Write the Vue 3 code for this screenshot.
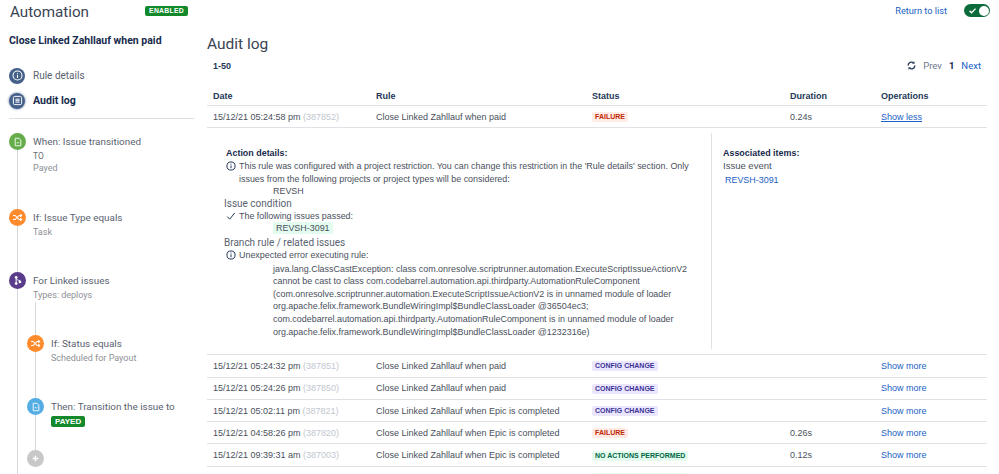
<template>
  <div class="page">
    <aside class="side">
      <div class="side-top">
        <h1 class="side-title">Automation</h1>
        <span class="enabled">ENABLED</span>
      </div>
      <p class="rule-name">Close Linked Zahllauf when paid</p>

      <div class="nav-item">
        <span class="nav-icon">
          <svg viewBox="0 0 16 16" width="11" height="11" fill="none" stroke="#fff" stroke-width="1.5">
            <circle cx="8" cy="8" r="6.5" />
            <path d="M8 7v4.5M8 4.2v1.4" />
          </svg>
        </span>
        <span>Rule details</span>
      </div>
      <div class="nav-item active">
        <span class="nav-icon">
          <svg viewBox="0 0 16 16" width="11" height="11" fill="none" stroke="#fff" stroke-width="1.4">
            <rect x="2" y="2" width="12" height="12" rx="2" />
            <path d="M5 6h6M5 8.2h6M5 10.4h6" />
          </svg>
        </span>
        <span>Audit log</span>
      </div>
      <div class="side-rule"></div>

      <div class="flow">
        <div class="step step-when">
          <span class="dot green">
            <svg viewBox="0 0 16 16" width="10" height="10" fill="none" stroke="#fff" stroke-width="1.4">
              <path d="M3.5 2h6L12.5 5v9h-9z" />
              <path d="M5.5 10l1.5-1.5 1.5 1.5 1.5-1.5" />
            </svg>
          </span>
          <div class="step-text">
            <p class="step-title">When: Issue transitioned</p>
            <p class="step-to">TO</p>
            <p class="step-sub">Payed</p>
          </div>
        </div>
        <div class="step step-if">
          <span class="dot orange">
            <svg viewBox="0 0 16 16" width="11" height="11" fill="none" stroke="#fff" stroke-width="1.6">
              <path d="M1.5 5h3l6 6h3M1.5 11h3l6-6h3M12 3l2 2-2 2M12 9l2 2-2 2" />
            </svg>
          </span>
          <div class="step-text">
            <p class="step-title">If: Issue Type equals</p>
            <p class="step-sub">Task</p>
          </div>
        </div>
        <div class="step step-for">
          <span class="dot purple">
            <svg viewBox="0 0 16 16" width="11" height="11" fill="#fff">
              <circle cx="6" cy="3.5" r="2" />
              <circle cx="6" cy="12.5" r="2" />
              <circle cx="11.5" cy="10" r="2" />
              <path d="M5.3 4h1.4v8H5.3zM6 6.5h2c2 0 4 1 4 3.5h-1.4c0-1.5-1.3-2.2-2.6-2.2H6z" />
            </svg>
          </span>
          <div class="step-text">
            <p class="step-title">For Linked issues</p>
            <p class="step-sub">Types: deploys</p>
          </div>
        </div>

        <div class="nested">
          <div class="step step-nested">
            <span class="dot orange">
              <svg viewBox="0 0 16 16" width="11" height="11" fill="none" stroke="#fff" stroke-width="1.6">
                <path d="M1.5 5h3l6 6h3M1.5 11h3l6-6h3M12 3l2 2-2 2M12 9l2 2-2 2" />
              </svg>
            </span>
            <div class="step-text">
              <p class="step-title">If: Status equals</p>
              <p class="step-sub">Scheduled for Payout</p>
            </div>
          </div>
          <div class="step step-then">
            <span class="dot blue">
              <svg viewBox="0 0 16 16" width="10" height="10" fill="none" stroke="#fff" stroke-width="1.4">
                <path d="M3.5 2h6L12.5 5v9h-9z" />
                <path d="M5.5 10l1.5-1.5 1.5 1.5 1.5-1.5" />
              </svg>
            </span>
            <div class="step-text">
              <p class="step-title">Then: Transition the issue to</p>
              <span class="payed">PAYED</span>
            </div>
          </div>
          <div class="step step-add">
            <span class="dot grey">
              <svg viewBox="0 0 16 16" width="9" height="9" fill="none" stroke="#fff" stroke-width="2.6">
                <path d="M8 3v10M3 8h10" />
              </svg>
            </span>
          </div>
        </div>
      </div>
    </aside>

    <main class="main">
      <div class="top-links">
        <a class="link">Return to list</a>
        <span class="toggle">
          <svg viewBox="0 0 12 12" width="9" height="9" fill="none" stroke="#fff" stroke-width="1.8">
            <path d="M2 6.5l2.8 2.5L10 3.5" />
          </svg>
          <span class="knob"></span>
        </span>
      </div>
      <h2 class="main-title">Audit log</h2>
      <div class="pager-row">
        <span class="range">1-50</span>
        <div class="pager">
          <svg viewBox="0 0 16 16" width="9" height="9" fill="none" stroke="#253858" stroke-width="2.4">
            <path d="M2 8a6 6 0 0 1 10-4.400M14 8a6 6 0 0 1-10 4.400" />
            <path d="M13 1v3.500h-3.500M3 15v-3.500h3.500" stroke-width="1.200" />
          </svg>
          <span class="prev">Prev</span>
          <span class="cur">1</span>
          <a class="link">Next</a>
        </div>
      </div>

      <table class="log">
        <colgroup>
          <col class="col-date" />
          <col class="col-rule" />
          <col class="col-status" />
          <col class="col-duration" />
          <col class="col-ops" />
        </colgroup>
        <thead>
          <tr>
            <th>Date</th>
            <th>Rule</th>
            <th>Status</th>
            <th>Duration</th>
            <th>Operations</th>
          </tr>
        </thead>
        <tbody>
          <tr>
            <td>15/12/21 05:24:58 pm <span class="num">(387852)</span></td>
            <td>Close Linked Zahllauf when paid</td>
            <td><span class="loz failure">FAILURE</span></td>
            <td>0.24s</td>
            <td><a class="link under">Show less</a></td>
          </tr>
          <tr class="detail-row">
            <td colspan="5">
              <div class="detail">
                <div class="detail-left">
                  <p class="detail-head">Action details:</p>
                  <div class="msg">
                    <svg class="msg-icon" viewBox="0 0 16 16" width="10" height="10" fill="none" stroke="#172b4d" stroke-width="1.5">
                      <circle cx="8" cy="8" r="6.5" />
                      <path d="M8 7v4.5M8 4.2v1.5" />
                    </svg>
                    <span>This rule was configured with a project restriction. You can change this restriction in the 'Rule details' section. Only issues from the following projects or project types will be considered:</span>
                  </div>
                  <p class="indent">REVSH</p>
                  <p class="group">Issue condition</p>
                  <div class="msg">
                    <svg class="msg-icon" viewBox="0 0 16 16" width="10" height="10" fill="none" stroke="#172b4d" stroke-width="1.5">
                      <path d="M2 9l4 4 8-10" />
                    </svg>
                    <span>The following issues passed:</span>
                  </div>
                  <p class="indent passed-line"><span class="passed">REVSH-3091</span></p>
                  <p class="group">Branch rule / related issues</p>
                  <div class="msg">
                    <svg class="msg-icon" viewBox="0 0 16 16" width="10" height="10" fill="none" stroke="#172b4d" stroke-width="1.5">
                      <circle cx="8" cy="8" r="6.5" />
                      <path d="M8 7v4.5M8 4.2v1.5" />
                    </svg>
                    <span>Unexpected error executing rule:</span>
                  </div>
                  <p class="indent stack">java.lang.ClassCastException: class com.onresolve.scriptrunner.automation.ExecuteScriptIssueActionV2 cannot be cast to class com.codebarrel.automation.api.thirdparty.AutomationRuleComponent (com.onresolve.scriptrunner.automation.ExecuteScriptIssueActionV2 is in unnamed module of loader org.apache.felix.framework.BundleWiringImpl$BundleClassLoader @36504ec3; com.codebarrel.automation.api.thirdparty.AutomationRuleComponent is in unnamed module of loader org.apache.felix.framework.BundleWiringImpl$BundleClassLoader @1232316e)</p>
                </div>
                <div class="detail-right">
                  <p class="detail-head">Associated items:</p>
                  <p class="assoc">Issue event</p>
                  <a class="link assoc-link">REVSH-3091</a>
                </div>
              </div>
            </td>
          </tr>
          <tr v-for="row in rows" :key="row.id">
            <td>{{ row.date }} <span class="num">({{ row.id }})</span></td>
            <td>{{ row.rule }}</td>
            <td><span class="loz" :class="row.kind">{{ row.status }}</span></td>
            <td>{{ row.duration }}</td>
            <td><a class="link">Show more</a></td>
          </tr>
          <tr class="cut-row">
            <td></td>
            <td></td>
            <td><span class="loz none">NO ACTIONS PERFORMED</span></td>
            <td></td>
            <td></td>
          </tr>
        </tbody>
      </table>
    </main>
  </div>
</template>

<script setup>
const rows = [
  { id: 387851, date: '15/12/21 05:24:32 pm', rule: 'Close Linked Zahllauf when paid', status: 'CONFIG CHANGE', kind: 'config', duration: '' },
  { id: 387850, date: '15/12/21 05:24:26 pm', rule: 'Close Linked Zahllauf when paid', status: 'CONFIG CHANGE', kind: 'config', duration: '' },
  { id: 387821, date: '15/12/21 05:02:11 pm', rule: 'Close Linked Zahllauf when Epic is completed', status: 'CONFIG CHANGE', kind: 'config', duration: '' },
  { id: 387820, date: '15/12/21 04:58:26 pm', rule: 'Close Linked Zahllauf when Epic is completed', status: 'FAILURE', kind: 'failure', duration: '0.26s' },
  { id: 387003, date: '15/12/21 09:39:31 am', rule: 'Close Linked Zahllauf when Epic is completed', status: 'NO ACTIONS PERFORMED', kind: 'none', duration: '0.12s' },
];
</script>

<style>
html,
body {
  margin: 0;
  background: #fff;
  overflow: hidden;
}
</style>

<style scoped>
.page {
  display: flex;
  width: 999px;
  height: 474px;
  overflow: hidden;
  font-family: 'Liberation Sans', Arial, sans-serif;
  font-size: 9px;
  color: #4a505c;
}
p,
h1,
h2 {
  margin: 0;
  font-weight: 400;
}

.side {
  width: 207px;
  flex: none;
  box-sizing: border-box;
  padding: 0 13px 0 9px;
  font-family: Roboto, 'Open Sans', sans-serif;
}
.side-top {
  display: flex;
  justify-content: space-between;
  align-items: center;
  height: 24px;
}
.side-title {
  margin-left: 1px;
  font-size: 15.2px;
  color: #3a4454;
}
.enabled {
  margin-top: -2px;
  margin-right: 6px;
  background: #14892c;
  color: #fff;
  font-family: 'Liberation Sans', sans-serif;
  font-weight: 700;
  font-size: 6.8px;
  letter-spacing: 0.3px;
  line-height: 10px;
  padding: 0 4px;
  border-radius: 2px;
}
.rule-name {
  margin-top: 5px;
  font-size: 10.5px;
  font-weight: 700;
  color: #172b4d;
  line-height: 24px;
}
.nav-item {
  display: flex;
  align-items: center;
  gap: 8px;
  height: 25px;
  font-size: 10px;
  color: #5a6270;
}
.rule-name + .nav-item {
  margin-top: 10px;
}
.nav-item.active {
  font-weight: 700;
  color: #172b4d;
  font-size: 10.6px;
}
.nav-icon {
  width: 16px;
  height: 16px;
  border-radius: 50%;
  background: #45618a;
  display: flex;
  align-items: center;
  justify-content: center;
  flex: none;
}
.active .nav-icon {
  box-shadow: 0 0 2px 1px #b9c4d6;
}
.side-rule {
  border-top: 1px solid #dcdfe4;
  margin-top: 5px;
}

.flow {
  position: relative;
  margin-top: 14px;
}
.flow::before {
  content: '';
  position: absolute;
  left: 8px;
  top: 6px;
  height: 340px;
  border-left: 1px solid #d5d8dd;
}
.step {
  position: relative;
  display: flex;
  gap: 7px;
}
.step-text {
  padding-top: 2px;
}
.step-when {
  height: 76px;
}
.step-if,
.step-for,
.step-nested {
  height: 63px;
}
.step-then {
  height: 52px;
}
.nested {
  position: relative;
  padding-left: 18px;
}
.nested::before {
  content: '';
  position: absolute;
  left: 26px;
  top: -33px;
  height: 148px;
  border-left: 1px solid #d5d8dd;
}
.dot {
  position: relative;
  z-index: 1;
  width: 17px;
  height: 17px;
  border-radius: 50%;
  display: flex;
  align-items: center;
  justify-content: center;
  flex: none;
}
.green {
  background: #65ad4a;
}
.orange {
  background: #ff8b2c;
}
.purple {
  background: #5a3d8a;
}
.blue {
  background: #53ade3;
}
.grey {
  background: #c8c8c8;
}
.step-title {
  line-height: 14px;
  font-size: 9.9px;
  color: #5a6270;
}
.step-to {
  margin-top: 1px;
  font-size: 8.5px;
  line-height: 12px;
  color: #6b6f76;
}
.step-sub {
  font-size: 9px;
  line-height: 13px;
  color: #8d9096;
}
.step-title + .step-sub {
  margin-top: 1px;
}
.payed {
  display: inline-block;
  margin-top: 2px;
  background: #14892c;
  color: #fff;
  font-family: 'Liberation Sans', sans-serif;
  font-weight: 700;
  font-size: 8px;
  line-height: 11px;
  padding: 0 4px;
  border-radius: 2px;
}

.main {
  flex: 1;
  min-width: 0;
  padding-right: 12px;
}
.link {
  color: #1a5fc4;
  text-decoration: none;
}
.under {
  text-decoration: underline;
}
.top-links {
  display: flex;
  justify-content: flex-end;
  align-items: center;
  gap: 17px;
  height: 21px;
  font-family: Roboto, sans-serif;
  font-size: 9.2px;
}
.toggle {
  width: 26px;
  height: 13px;
  margin-right: -3px;
  border-radius: 7px;
  background: #0b6b3a;
  position: relative;
  display: flex;
  align-items: center;
  padding-left: 4px;
  box-sizing: border-box;
}
.knob {
  position: absolute;
  right: 1.5px;
  top: 1.5px;
  width: 10px;
  height: 10px;
  border-radius: 50%;
  background: #fff;
}
.main-title {
  margin-top: 13px;
  font-family: Roboto, sans-serif;
  font-size: 15.5px;
  line-height: 21px;
  color: #3a4454;
}
.pager-row {
  display: flex;
  justify-content: space-between;
  align-items: center;
  height: 17px;
  margin-top: 2px;
  padding: 0 6px;
}
.range {
  font-size: 9px;
  font-weight: 700;
  color: #253858;
}
.pager {
  display: flex;
  align-items: center;
  gap: 7px;
  font-family: Roboto, sans-serif;
  font-size: 9.5px;
}
.prev {
  color: #6b778c;
}
.cur {
  font-weight: 700;
  color: #172b4d;
}

.log {
  width: 780px;
  margin-top: 10px;
  border-collapse: collapse;
  table-layout: fixed;
}
.col-date {
  width: 163px;
}
.col-rule {
  width: 216px;
}
.col-status {
  width: 198px;
}
.col-duration {
  width: 91px;
}
.col-ops {
  width: 112px;
}
th {
  height: 19px;
  padding: 2px 6px 0;
  text-align: left;
  font-size: 9px;
  color: #253858;
  border-bottom: 1px solid #dfe1e6;
}
td {
  height: 21.3px;
  padding: 0 6px;
  border-bottom: 1px solid #dfe1e6;
  white-space: nowrap;
}
.num {
  color: #c1c7d0;
}
.loz {
  display: inline-block;
  padding: 0 3px;
  border-radius: 2px;
  font-size: 7px;
  font-weight: 700;
  line-height: 10px;
}
.failure {
  background: #ffebe6;
  color: #bf2600;
}
.config {
  background: #eae6ff;
  color: #403294;
}
.none {
  background: #e3fcef;
  color: #006644;
}
.cut-row td {
  border-bottom: 0;
}

.detail-row td {
  padding: 0;
  height: auto;
  white-space: normal;
}
.detail {
  display: flex;
  padding: 5px 0;
  height: 216px;
  font-size: 8.93px;
}
.detail-left {
  width: 505px;
  box-sizing: border-box;
  padding: 15px 18px 0 17px;
  border-right: 1px solid #dfe1e6;
  line-height: 12.6px;
}
.detail-right {
  padding: 15px 0 0 11px;
  line-height: 12.6px;
}
.detail-head {
  padding-left: 2px;
  line-height: 11.7px;
  font-weight: 700;
  color: #172b4d;
}
.detail-right .detail-head {
  padding-left: 0;
}
.assoc {
  font-size: 9.5px;
}
.assoc-link {
  display: block;
  margin-top: 1px;
  padding-left: 2px;
}
.msg {
  display: flex;
  gap: 3px;
  padding-left: 2px;
}
.msg-icon {
  flex: none;
  margin-top: 1px;
}
.indent {
  padding-left: 49px;
}
.passed {
  background: #e3fcef;
  padding: 1px 3px;
}
.passed-line {
  margin-bottom: 2px;
}
.group {
  font-family: Roboto, sans-serif;
  font-size: 10px;
  line-height: 12px;
  color: #5a6270;
}
.stack {
  margin-top: 1px;
}
</style>
